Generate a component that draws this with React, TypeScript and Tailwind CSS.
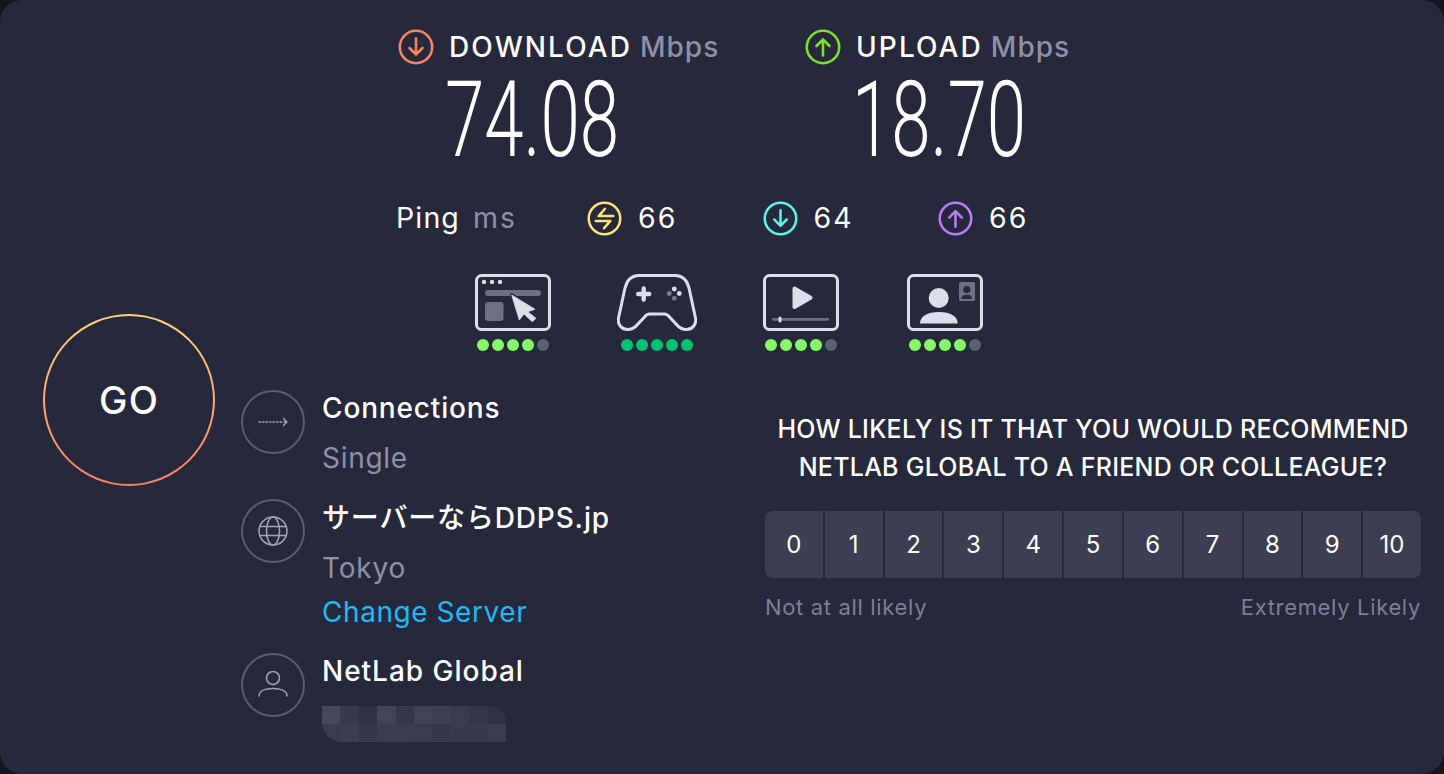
import type { ReactNode } from "react"

const speeds = [
  { label: "DOWNLOAD", value: "74.08", width: "w-[407px]", down: true, color: "#fa8361" },
  { label: "UPLOAD", value: "18.70", width: "w-[270px]", down: false, color: "#7fdf2e" },
]

const pings = [
  { value: "66", color: "#ffe27d", kind: "both" },
  { value: "64", color: "#5cf4e4", kind: "down" },
  { value: "66", color: "#b97cf6", kind: "up" },
]

const blurCells = [
  ["#474959", "#383a4c", "#303244", "#434557", "#36384a", "#424456", "#3f4153", "#3a3c4e", "#34364a", "#2f3144"],
  ["#3a3c4e", "#3d3f51", "#35374a", "#3c3e50", "#3c3e50", "#3a3c4e", "#36384b", "#393b4d", "#393b4d", "#3b3d4f"],
]

function StatusIcon({ kind, color, size }: { kind: string; color: string; size: number }) {
  return (
    <svg width={size} height={size} viewBox="0 0 36 36" fill="none" stroke={color} strokeWidth="2.6" strokeLinecap="round" strokeLinejoin="round" className="shrink-0">
      <circle cx="18" cy="18" r="16.2" />
      {kind === "down" && <path d="M18 9.5v16M11.5 19l6.5 6.5 6.5-6.5" />}
      {kind === "up" && <path d="M18 26.5v-16M11.5 17l6.5-6.5 6.5 6.5" />}
      {kind === "both" && <path d="M18.5 8l-6.5 7.5h15M17.5 28l6.5-7.5H9" />}
    </svg>
  )
}

function BrowserIcon() {
  return (
    <svg width="76" height="58" viewBox="0 0 76 58" fill="none">
      <rect x="1.5" y="1.5" width="73" height="54" rx="5" stroke="#dcdeea" strokeWidth="3" />
      <circle cx="9" cy="8" r="2.2" fill="#dcdeea" />
      <circle cx="17" cy="8" r="2.2" fill="#dcdeea" />
      <circle cx="25" cy="8" r="2.2" fill="#dcdeea" />
      <rect x="10" y="16" width="56" height="6" rx="3" fill="#6e7082" />
      <rect x="10" y="28" width="18.5" height="19" rx="3" fill="#6e7082" />
      <path d="M36.7 21L60 35.3l-7.3 2.4 8.3 6.6-3.7 3.4L49 40l-4.7 6z" stroke="#26283b" strokeWidth="3.5" strokeLinejoin="round" />
      <path d="M36.7 21L60 35.3l-7.3 2.4 8.3 6.6-3.7 3.4L49 40l-4.7 6z" fill="#dcdeea" stroke="#dcdeea" strokeWidth="0.8" strokeLinejoin="round" />
    </svg>
  )
}

function GamepadIcon() {
  return (
    <svg width="80" height="58" viewBox="0 0 80 58" fill="none">
      <path
        d="M22 1.5H58C65 1.500 70 6 72 14L78.500 44C79.800 50.500 75 55.500 69.500 55.500 65 55.500 62 53.500 59.500 50.500L52.500 43C51 41 49.500 40 47.500 40H32.500C30.500 40 29 41 27.500 43L20.500 50.500C18 53.500 15 55.500 10.500 55.500 5 55.500 0.200 50.500 1.500 44L8 14C10 6 15 1.500 22 1.500z"
        stroke="#dcdeea"
        strokeWidth="3"
      />
      <path d="M26.700 14.500v11M21.200 20h11" stroke="#dcdeea" strokeWidth="4.400" strokeLinecap="round" />
      <circle cx="57.300" cy="15" r="2.400" fill="#dcdeea" />
      <circle cx="62.300" cy="19.500" r="2.400" fill="#dcdeea" />
      <circle cx="52.300" cy="19.500" r="2.400" fill="#7a7c8e" />
      <circle cx="57.300" cy="24.300" r="2.400" fill="#7a7c8e" />
    </svg>
  )
}

function VideoIcon() {
  return (
    <svg width="76" height="58" viewBox="0 0 76 58" fill="none">
      <rect x="1.500" y="1.500" width="73" height="54" rx="5" stroke="#dcdeea" strokeWidth="3" />
      <path d="M31.500 14.500L47.500 23.800 31.500 33z" fill="#dcdeea" stroke="#dcdeea" strokeWidth="4" strokeLinejoin="round" />
      <rect x="9" y="44" width="57" height="2.800" rx="1.400" fill="#6e7082" />
      <rect x="15.500" y="42.400" width="3" height="6" rx="1.500" fill="#dcdeea" />
    </svg>
  )
}

function CallIcon() {
  return (
    <svg width="76" height="58" viewBox="0 0 76 58" fill="none">
      <rect x="1.500" y="1.500" width="73" height="54" rx="5" stroke="#dcdeea" strokeWidth="3" />
      <circle cx="31.700" cy="24" r="10" fill="#dcdeea" />
      <path d="M13 49.500c0-7 7-11.500 18.800-11.500s18.900 4.500 18.900 11.500z" fill="#dcdeea" />
      <rect x="52" y="8" width="16" height="19" rx="1.500" fill="#6e7082" />
      <circle cx="59.800" cy="15.500" r="3.600" fill="#26283b" />
      <path d="M54.500 25c0-3 2.300-4.300 5.300-4.300s5.300 1.300 5.300 4.300z" fill="#26283b" />
    </svg>
  )
}

const services: { icon: ReactNode; dots: string[] }[] = [
  { icon: <BrowserIcon />, dots: ["bg-[#85fa67]", "bg-[#85fa67]", "bg-[#85fa67]", "bg-[#85fa67]", "bg-[#5d5f72]"] },
  { icon: <GamepadIcon />, dots: ["bg-[#00c270]", "bg-[#00c270]", "bg-[#00c270]", "bg-[#00c270]", "bg-[#00c270]"] },
  { icon: <VideoIcon />, dots: ["bg-[#85fa67]", "bg-[#85fa67]", "bg-[#85fa67]", "bg-[#85fa67]", "bg-[#5d5f72]"] },
  { icon: <CallIcon />, dots: ["bg-[#85fa67]", "bg-[#85fa67]", "bg-[#85fa67]", "bg-[#85fa67]", "bg-[#5d5f72]"] },
]

function RoundBadge({ children }: { children: ReactNode }) {
  return (
    <div className="flex h-[64px] w-[64px] shrink-0 items-center justify-center rounded-full border-2 border-[#5b5d6f]">
      {children}
    </div>
  )
}

export default function App() {
  return (
    <div className="h-[774px] w-[1444px] overflow-hidden bg-[#14151f] font-[Inter,'Noto_Sans_CJK_JP',sans-serif] text-white">
      <div className="flex h-full w-full rounded-[22px] bg-[#26283b]">
        {/* GO button */}
        <div className="w-[241px] shrink-0 pl-[43px] pt-[314px]">
          <div className="h-[172px] w-[172px] rounded-full bg-gradient-to-b from-[#ffd27a] to-[#fb7d62] p-[2px]">
            <button className="flex h-full w-full items-center justify-center rounded-full bg-[#26283b] text-[38px] font-medium tracking-[0.03em]">
              GO
            </button>
          </div>
        </div>

        <div className="flex min-w-0 flex-1 flex-col">
          <div className="pl-[157px] pt-[29px]">
            <div className="flex">
              {speeds.map((s) => (
                <div key={s.label} className={s.width}>
                  <div className="flex h-[36px] items-center text-[28px] font-medium">
                    <StatusIcon kind={s.down ? "down" : "up"} color={s.color} size={36} />
                    <span className="ml-[15px] tracking-[0.075em]">{s.label}</span>
                    <span className="ml-[8px] tracking-[0.035em] text-[#8e90a6]">Mbps</span>
                  </div>
                  <div className="mt-[1px] h-[110px] w-[268px] origin-center scale-x-[0.675] text-center font-['Roboto',sans-serif] text-[105px] font-light leading-[110px]">
                    {s.value}
                  </div>
                </div>
              ))}
            </div>

            <div className="ml-[-2px] mt-[24px] flex h-[36px] items-center text-[28.500px]">
              <div className="flex w-[191px] items-baseline">
                <span className="tracking-[0.04em]">Ping</span>
                <span className="ml-[13px] tracking-[0.07em] text-[#8e90a6]">ms</span>
              </div>
              {pings.map((p, i) => (
                <div key={i} className="flex w-[175.500px] items-center">
                  <StatusIcon kind={p.kind} color={p.color} size={35} />
                  <span className="ml-[16px] tracking-[0.07em]">{p.value}</span>
                </div>
              ))}
            </div>
          </div>

          <div className="ml-[200px] mt-[38px] flex">
            {services.map((s, i) => (
              <div key={i} className="flex w-[144px] flex-col items-center">
                <div className="flex h-[58px] items-center justify-center">{s.icon}</div>
                <div className="mt-[7px] flex gap-[3px]">
                  {s.dots.map((c, j) => (
                    <span key={j} className={`h-[12px] w-[12px] rounded-full ${c}`} />
                  ))}
                </div>
              </div>
            ))}
          </div>

          <div className="mt-[39px] flex">
            {/* server details */}
            <div className="w-[524px] shrink-0 text-[28px]">
              <div className="flex gap-[17px]">
                <RoundBadge>
                  <svg width="30" height="10" viewBox="0 0 30 10" fill="none" stroke="#a2a4b6" strokeWidth="1.400" strokeLinecap="round" strokeLinejoin="round">
                    <path d="M1 5h24" strokeDasharray="1.500 2" />
                    <path d="M25.500 1.500L29 5l-3.500 3.500M26 5h3" />
                  </svg>
                </RoundBadge>
                <div className="mt-[-4px]">
                  <div className="h-[44px] font-medium leading-[44px] tracking-[0.03em]">Connections</div>
                  <div className="mt-[6px] h-[44px] leading-[44px] tracking-[0.025em] text-[#8e90a6]">Single</div>
                </div>
              </div>

              <div className="mt-[19px] flex gap-[17px]">
                <RoundBadge>
                  <svg width="32" height="32" viewBox="0 0 32 32" fill="none" stroke="#a2a4b6" strokeWidth="1.500">
                    <circle cx="16" cy="16" r="14" />
                    <ellipse cx="16" cy="16" rx="6.500" ry="14" />
                    <path d="M2 11.500h28M2 20.500h28" />
                  </svg>
                </RoundBadge>
                <div className="mt-[-3px]">
                  <div className="h-[44px] font-medium leading-[44px] tracking-[0.03em]">サーバーならDDPS.jp</div>
                  <div className="mt-[6px] h-[44px] leading-[44px] tracking-[0.03em] text-[#8e90a6]">Tokyo</div>
                  <div className="h-[44px] leading-[44px] tracking-[0.02em] text-[#22b8f5]">Change Server</div>
                </div>
              </div>

              <div className="mt-[19px] flex gap-[17px]">
                <RoundBadge>
                  <svg width="32" height="32" viewBox="0 0 32 32" fill="none" stroke="#a2a4b6" strokeWidth="1.500" strokeLinecap="round">
                    <circle cx="16" cy="9" r="6.500" />
                    <path d="M2 27c0-5 6-7.500 14-7.500S30 22 30 27" />
                  </svg>
                </RoundBadge>
                <div className="mt-[-4px]">
                  <div className="h-[44px] font-medium leading-[44px] tracking-[0.035em]">NetLab Global</div>
                  <div className="mt-[13px] w-[184px] overflow-hidden rounded-bl-[20px] rounded-tr-[16px]">
                    {blurCells.map((row, i) => (
                      <div key={i} className="flex">
                        {row.map((c, j) => (
                          <span key={j} className="h-[18px] w-[18.400px]" style={{ backgroundColor: c }} />
                        ))}
                      </div>
                    ))}
                  </div>
                </div>
              </div>
            </div>

            {/* recommendation survey */}
            <div className="w-[656px] shrink-0">
              <div className="mt-[20px] whitespace-nowrap text-center text-[25px] font-medium leading-[38px] tracking-[0.01em]">
                <div>HOW LIKELY IS IT THAT YOU WOULD RECOMMEND</div>
                <div>NETLAB GLOBAL TO A FRIEND OR COLLEAGUE?</div>
              </div>
              <div className="mt-[25px] flex h-[67px] gap-[2px] overflow-hidden rounded-lg">
                {Array.from({ length: 11 }, (_, i) => (
                  <button key={i} className="flex flex-1 items-center justify-center bg-[#3c3f51] text-[24px]">
                    {i}
                  </button>
                ))}
              </div>
              <div className="mt-[13px] flex justify-between text-[22px] tracking-[0.03em] text-[#7d7f93]">
                <span>Not at all likely</span>
                <span>Extremely Likely</span>
              </div>
            </div>
          </div>
        </div>
      </div>
    </div>
  )
}
